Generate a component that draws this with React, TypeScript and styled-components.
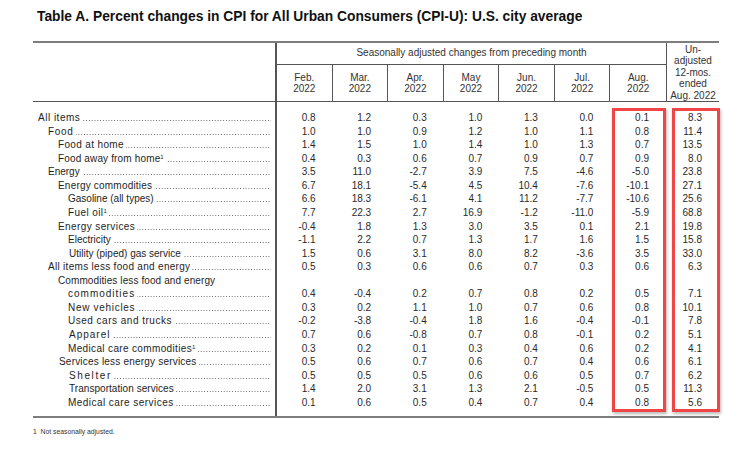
import React from "react";
import styled, { createGlobalStyle } from "styled-components";

const GlobalStyle = createGlobalStyle`
  html, body { margin: 0; padding: 0; background: #fff; }
  body {
    font-family: "Liberation Sans", Arial, Helvetica, sans-serif;
    color: #222;
  }
`;

const COLS = "244px repeat(7, 1fr) 53px";

const Page = styled.div`
  width: 747px;
  height: 449px;
  box-sizing: border-box;
  padding: 9px 0 0 33px;
  overflow: hidden;
`;

const Title = styled.h1`
  margin: 0 0 0 4px;
  font-size: 13.8px;
  line-height: 16px;
  font-weight: bold;
  color: #111;
`;

const Table = styled.div`
  position: relative;
  width: 686px;
  margin-top: 16px;
  border-top: 2px solid #7d7d7d;
  border-bottom: 2px solid #7d7d7d;
`;

const Header = styled.div`
  display: grid;
  grid-template-columns: ${COLS};
  grid-template-rows: 22px 36px;
  border-bottom: 1px solid #555;
  font-size: 10px;
  color: #333;
`;

const LabelHead = styled.div`
  grid-row: 1 / 3;
  grid-column: 1;
  border-right: 2px solid #555;
`;

const SpanHead = styled.div`
  grid-row: 1;
  grid-column: 2 / 9;
  border-bottom: 1px solid #555;
  display: flex;
  align-items: center;
  justify-content: center;
  padding-bottom: 2px;
`;

const MonthHead = styled.div<{ $last?: boolean }>`
  grid-row: 2;
  display: flex;
  flex-direction: column;
  align-items: center;
  justify-content: center;
  line-height: 11.5px;
  text-align: center;
  border-right: ${(p) => (p.$last ? "none" : "1px solid #555")};
`;

const UnadjHead = styled.div`
  grid-row: 1 / 3;
  grid-column: 9;
  border-left: 1px solid #555;
  display: flex;
  flex-direction: column;
  align-items: center;
  justify-content: center;
  line-height: 11.5px;
  text-align: center;
  padding-top: 1px;
`;

const Body = styled.div`
  position: relative;
  padding: 9px 0 7px;
  background: linear-gradient(#555, #555) 242px 0 / 2px 100% no-repeat;
  font-size: 10px;
  line-height: 13.57px;
`;

const Row = styled.div`
  display: grid;
  grid-template-columns: ${COLS};
  height: 13.57px;
`;

const Label = styled.div<{ $level: number }>`
  display: flex;
  align-items: baseline;
  padding-left: ${(p) => 5 + p.$level * 10}px;
  padding-right: 6px;
  white-space: nowrap;
`;

const LabelText = styled.span<{ $spread: number }>`
  letter-spacing: ${(p) => p.$spread}px;
  color: #1e1e1e;
`;

const Sup = styled.sup`
  font-size: 6px;
  line-height: 0;
  vertical-align: 3px;
  letter-spacing: 0;
`;

const Leader = styled.span`
  flex: 1;
  min-width: 0;
  height: 1px;
  margin-left: 2px;
  background-image: linear-gradient(to right, #6a6a6a 1px, transparent 1px);
  background-size: 2.8px 1px;
  background-repeat: repeat-x;
  background-position: right bottom;
`;

const Value = styled.div`
  text-align: right;
  padding-right: 17px;
  color: #2a2a2a;
`;

const Highlight = styled.div<{ $left: number; $width: number }>`
  position: absolute;
  top: 6px;
  left: ${(p) => p.$left}px;
  width: ${(p) => p.$width}px;
  height: 304px;
  box-sizing: border-box;
  border: 3px solid #f14646;
  box-shadow: 1px 2px 3px rgba(0, 0, 0, 0.28);
  pointer-events: none;
`;

const Footnote = styled.div`
  margin-top: 10px;
  font-size: 6.8px;
  color: #333;
  white-space: pre;
`;

type RowData = {
  label: string;
  sup?: boolean;
  level: number;
  spread: number;
  values?: string[];
  noLeader?: boolean;
};

const rows: RowData[] = [
  { label: "All items", level: 0, spread: 0.5, values: ["0.8", "1.2", "0.3", "1.0", "1.3", "0.0", "0.1", "8.3"] },
  { label: "Food", level: 1, spread: 0.7, values: ["1.0", "1.0", "0.9", "1.2", "1.0", "1.1", "0.8", "11.4"] },
  { label: "Food at home", level: 2, spread: 0.35, values: ["1.4", "1.5", "1.0", "1.4", "1.0", "1.3", "0.7", "13.5"] },
  { label: "Food away from home", sup: true, level: 2, spread: 0.15, values: ["0.4", "0.3", "0.6", "0.7", "0.9", "0.7", "0.9", "8.0"] },
  { label: "Energy", level: 1, spread: 0, values: ["3.5", "11.0", "-2.7", "3.9", "7.5", "-4.6", "-5.0", "23.8"] },
  { label: "Energy commodities", level: 2, spread: 0.2, values: ["6.7", "18.1", "-5.4", "4.5", "10.4", "-7.6", "-10.1", "27.1"] },
  { label: "Gasoline (all types)", level: 3, spread: 0, values: ["6.6", "18.3", "-6.1", "4.1", "11.2", "-7.7", "-10.6", "25.6"] },
  { label: "Fuel oil", sup: true, level: 3, spread: 0.4, values: ["7.7", "22.3", "2.7", "16.9", "-1.2", "-11.0", "-5.9", "68.8"] },
  { label: "Energy services", level: 2, spread: 0.4, values: ["-0.4", "1.8", "1.3", "3.0", "3.5", "0.1", "2.1", "19.8"] },
  { label: "Electricity", level: 3, spread: 0, values: ["-1.1", "2.2", "0.7", "1.3", "1.7", "1.6", "1.5", "15.8"] },
  { label: "Utility (piped) gas service", level: 3.1, spread: 0, values: ["1.5", "0.6", "3.1", "8.0", "8.2", "-3.6", "3.5", "33.0"] },
  { label: "All items less food and energy", level: 1, spread: 0.3, values: ["0.5", "0.3", "0.6", "0.6", "0.7", "0.3", "0.6", "6.3"] },
  { label: "Commodities less food and energy", level: 2, spread: 0.1, noLeader: true },
  { label: "commodities", level: 3, spread: 1.0, values: ["0.4", "-0.4", "0.2", "0.7", "0.8", "0.2", "0.5", "7.1"] },
  { label: "New vehicles", level: 3, spread: 0.7, values: ["0.3", "0.2", "1.1", "1.0", "0.7", "0.6", "0.8", "10.1"] },
  { label: "Used cars and trucks", level: 3, spread: 0.5, values: ["-0.2", "-3.8", "-0.4", "1.8", "1.6", "-0.4", "-0.1", "7.8"] },
  { label: "Apparel", level: 3.1, spread: 1.0, values: ["0.7", "0.6", "-0.8", "0.7", "0.8", "-0.1", "0.2", "5.1"] },
  { label: "Medical care commodities", sup: true, level: 3, spread: 0.35, values: ["0.3", "0.2", "0.1", "0.3", "0.4", "0.6", "0.2", "4.1"] },
  { label: "Services less energy services", level: 2.1, spread: 0.2, values: ["0.5", "0.6", "0.7", "0.6", "0.7", "0.4", "0.6", "6.1"] },
  { label: "Shelter", level: 3.1, spread: 1.6, values: ["0.5", "0.5", "0.5", "0.6", "0.6", "0.5", "0.7", "6.2"] },
  { label: "Transportation services", level: 3.1, spread: 0.05, values: ["1.4", "2.0", "3.1", "1.3", "2.1", "-0.5", "0.5", "11.3"] },
  { label: "Medical care services", level: 3, spread: 0.45, values: ["0.1", "0.6", "0.5", "0.4", "0.7", "0.4", "0.8", "5.6"] },
];

const months = ["Feb.", "Mar.", "Apr.", "May", "Jun.", "Jul.", "Aug."];

export default function App() {
  return (
    <>
      <GlobalStyle />
      <Page>
        <Title>
          Table A. Percent changes in CPI for All Urban Consumers (CPI-U): U.S. city average
        </Title>
        <Table>
          <Header>
            <LabelHead />
            <SpanHead>Seasonally adjusted changes from preceding month</SpanHead>
            {months.map((m, i) => (
              <MonthHead key={m} $last={i === months.length - 1}>
                <span>{m}</span>
                <span>2022</span>
              </MonthHead>
            ))}
            <UnadjHead>
              <span>Un-</span>
              <span>adjusted</span>
              <span>12-mos.</span>
              <span>ended</span>
              <span>Aug. 2022</span>
            </UnadjHead>
          </Header>
          <Body>
            {rows.map((r, i) => (
              <Row key={i}>
                <Label $level={r.level}>
                  <LabelText $spread={r.spread}>
                    {r.label}
                    {r.sup && <Sup>1</Sup>}
                  </LabelText>
                  {!r.noLeader && <Leader />}
                </Label>
                {(r.values ?? Array(8).fill("")).map((v, j) => (
                  <Value key={j}>{v}</Value>
                ))}
              </Row>
            ))}
            <Highlight $left={579} $width={54} />
            <Highlight $left={639} $width={48} />
          </Body>
        </Table>
        <Footnote>{"1  Not seasonally adjusted."}</Footnote>
      </Page>
    </>
  );
}
